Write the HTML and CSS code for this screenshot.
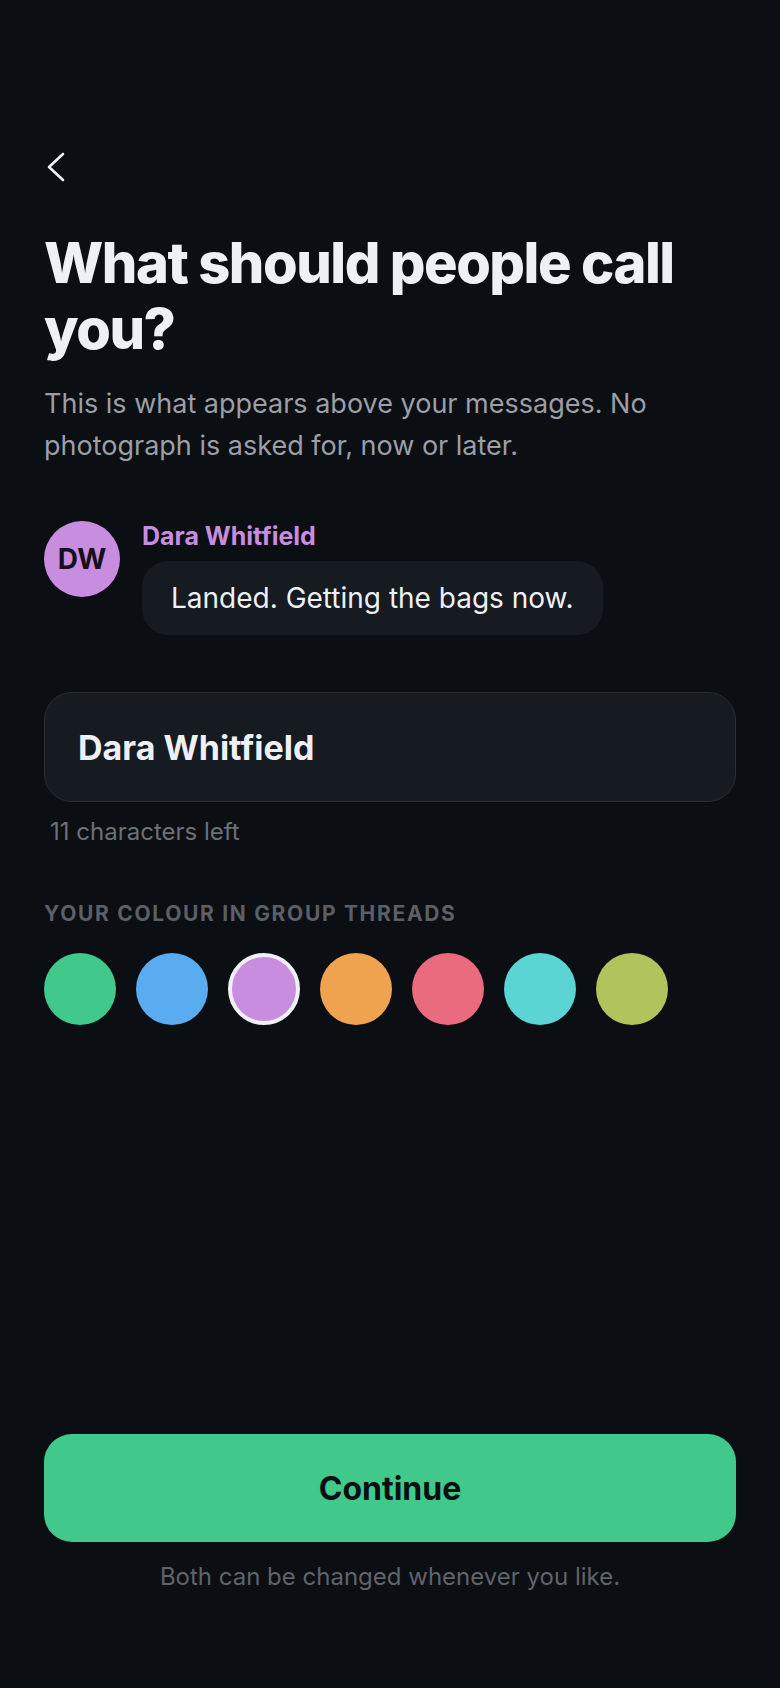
FILE: index.html
```html
<!DOCTYPE html>
<html lang="en">
<head>
    <meta charset="UTF-8">
    <meta name="viewport" content="width=device-width, initial-scale=1.0">
    <title>Display name</title>
    <link rel="stylesheet" href="styles.css">
</head>
<body>
    <div class="screen">
        <button class="back" aria-label="Back">
            <svg width="24" height="32" viewBox="0 0 24 32">
                <polyline points="19,3 5,16 19,29" fill="none" stroke="#eef0f5" stroke-width="2.6" stroke-linecap="round" stroke-linejoin="round"/>
            </svg>
        </button>

        <h1 class="title">What should people call you?</h1>
        <p class="subtitle">This is what appears above your messages. No photograph is asked for, now or later.</p>

        <!-- preview of how the name shows up in a thread -->
        <div class="preview">
            <div class="avatar">DW</div>
            <div class="preview-body">
                <div class="preview-name">Dara Whitfield</div>
                <div class="bubble">Landed. Getting the bags now.</div>
            </div>
        </div>

        <div class="name-field">
            <input type="text" class="name-input" value="Dara Whitfield" maxlength="25">
        </div>
        <div class="hint">11 characters left</div>

        <div class="section-label">Your colour in group threads</div>
        <div class="swatches">
            <span class="swatch green"></span>
            <span class="swatch blue"></span>
            <span class="swatch purple selected"></span>
            <span class="swatch orange"></span>
            <span class="swatch red"></span>
            <span class="swatch cyan"></span>
            <span class="swatch olive"></span>
        </div>

        <div class="bottom">
            <button class="continue">Continue</button>
            <p class="footnote">Both can be changed whenever you like.</p>
        </div>
    </div>
</body>
</html>
```

FILE: styles.css
```css
body {
    margin: 0;
    background: #0b0e12;
    font-family: 'Inter', 'Noto Sans', sans-serif;
    color: #eef0f5;
}

.screen {
    display: flex;
    flex-direction: column;
    min-height: 100vh;
    box-sizing: border-box;
    padding: 151px 44px 96px;
}

.back {
    background: none;
    border: none;
    padding: 0;
    width: 24px;
    height: 32px;
    cursor: pointer;
}

.back svg {
    display: block;
}

.title {
    margin: 47px 0 0;
    font-size: 56px;
    line-height: 66px;
    font-weight: 800;
    letter-spacing: -0.026em;
    color: #eef0f5;
}

.subtitle {
    margin: 21px 0 0;
    font-size: 27px;
    line-height: 42px;
    color: #9a9fa8;
}

/* Message preview */
.preview {
    display: flex;
    gap: 22px;
    margin-top: 54px;
}

.avatar {
    width: 76px;
    height: 76px;
    flex-shrink: 0;
    border-radius: 50%;
    background: #c98de0;
    color: #15101a;
    font-size: 28px;
    font-weight: 700;
    display: flex;
    align-items: center;
    justify-content: center;
}

.preview-body {
    display: flex;
    flex-direction: column;
    align-items: flex-start;
}

.preview-name {
    font-size: 25px;
    line-height: 30px;
    font-weight: 700;
    color: #c98de0;
}

.bubble {
    margin-top: 10px;
    padding: 20px 29px;
    background: #161a21;
    border-radius: 26px;
    font-size: 28px;
    line-height: 34px;
    color: #eef0f5;
}

/* Name input */
.name-field {
    margin-top: 57px;
    height: 110px;
    box-sizing: border-box;
    border: 1px solid #2a2e36;
    border-radius: 28px;
    background: #161a21;
    display: flex;
    align-items: center;
    padding: 0 33px;
}

.name-input {
    width: 100%;
    background: none;
    border: none;
    outline: none;
    padding: 0;
    font-family: inherit;
    font-size: 34px;
    font-weight: 700;
    color: #eef0f5;
}

.hint {
    margin: 16px 0 0 6px;
    font-size: 24px;
    line-height: 28px;
    color: #6b7079;
}

.section-label {
    margin-top: 55px;
    font-size: 21px;
    line-height: 26px;
    font-weight: 700;
    letter-spacing: 0.08em;
    text-transform: uppercase;
    color: #5b6068;
}

.swatches {
    display: flex;
    gap: 20px;
    margin-top: 26px;
}

.swatch {
    width: 72px;
    height: 72px;
    border-radius: 50%;
    box-sizing: border-box;
}

.swatch.selected {
    border: 4px solid #eef0f5;
}

.green  { background: #40c98b; }
.blue   { background: #5aacf1; }
.purple { background: #c98de0; }
.orange { background: #f0a34f; }
.red    { background: #e96b7d; }
.cyan   { background: #5ad5d4; }
.olive  { background: #b1c35d; }

/* Bottom actions */
.bottom {
    margin-top: auto;
}

.continue {
    width: 100%;
    height: 108px;
    border: none;
    border-radius: 28px;
    background: #40c98b;
    color: #0b0e12;
    font-family: inherit;
    font-size: 32px;
    font-weight: 700;
    cursor: pointer;
}

.footnote {
    margin: 20px 0 0;
    text-align: center;
    font-size: 24px;
    line-height: 30px;
    color: #5f646c;
}
```
